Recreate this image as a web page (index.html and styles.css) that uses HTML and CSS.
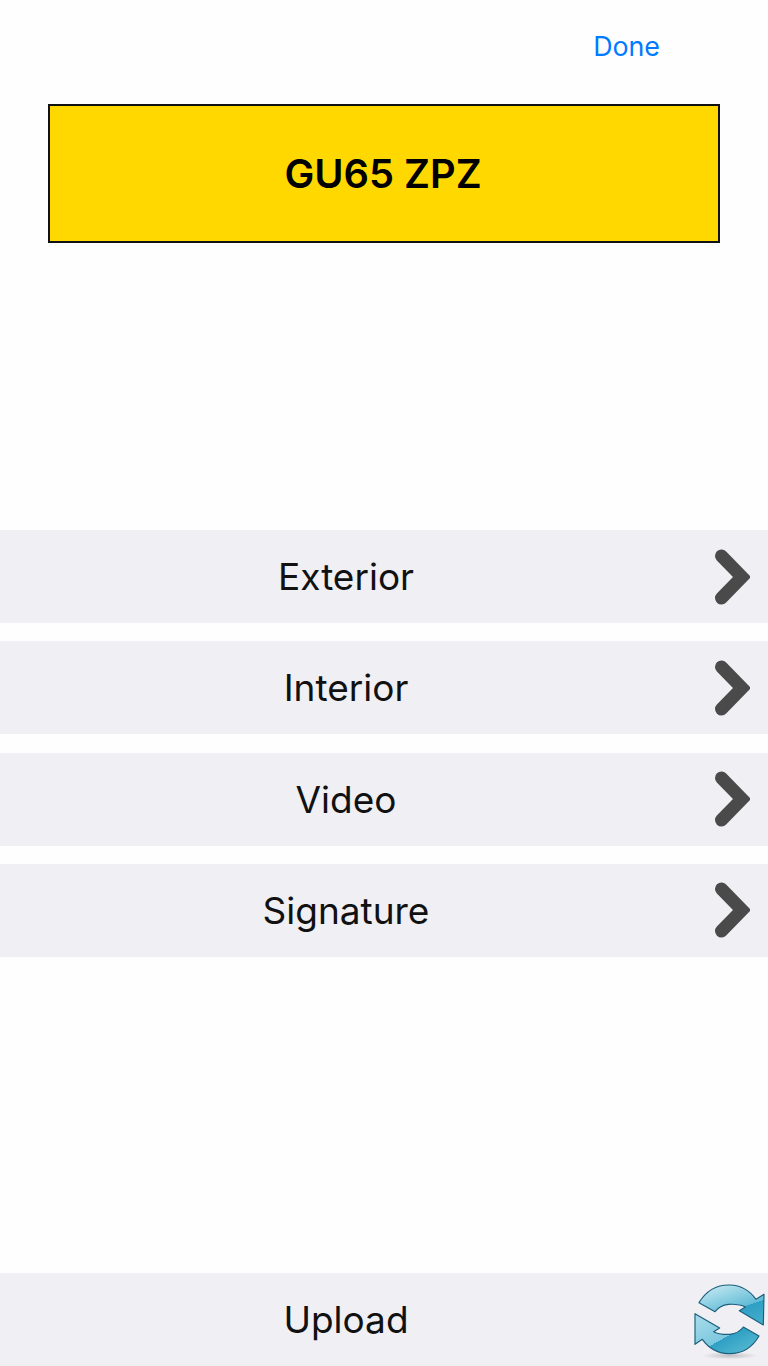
FILE: index.html
```html
<!DOCTYPE html>
<html lang="en">
<head>
    <meta charset="UTF-8">
    <meta name="viewport" content="width=device-width, initial-scale=1.0">
    <title>Vehicle</title>
    <link rel="stylesheet" href="styles.css">
</head>
<body>
    <div class="screen">
        <div class="top-bar">
            <a class="done">Done</a>
        </div>
        <div class="plate">GU65 ZPZ</div>

        <div class="menu">
            <div class="row">
                <span class="row-label">Exterior</span>
                <svg class="chevron" viewBox="0 0 36 56"><path d="M7.5 7 L28 28 L7.5 49"/></svg>
            </div>
            <div class="row">
                <span class="row-label">Interior</span>
                <svg class="chevron" viewBox="0 0 36 56"><path d="M7.5 7 L28 28 L7.5 49"/></svg>
            </div>
            <div class="row">
                <span class="row-label">Video</span>
                <svg class="chevron" viewBox="0 0 36 56"><path d="M7.5 7 L28 28 L7.5 49"/></svg>
            </div>
            <div class="row">
                <span class="row-label">Signature</span>
                <svg class="chevron" viewBox="0 0 36 56"><path d="M7.5 7 L28 28 L7.5 49"/></svg>
            </div>
        </div>

        <div class="row upload">
            <span class="row-label">Upload</span>
            <svg class="sync" viewBox="0 0 264 318">
                <defs>
                    <linearGradient id="syncTop" gradientUnits="userSpaceOnUse" x1="150" y1="70" x2="200" y2="220">
                        <stop offset="0" stop-color="#b6e2ee"/>
                        <stop offset="0.5" stop-color="#62bbd6"/>
                        <stop offset="0.5" stop-color="#2f9fc4"/>
                        <stop offset="1" stop-color="#48b0cf"/>
                    </linearGradient>
                    <linearGradient id="syncBottom" gradientUnits="userSpaceOnUse" x1="90" y1="140" x2="190" y2="320">
                        <stop offset="0" stop-color="#a8dcea"/>
                        <stop offset="0.5" stop-color="#7cc8df"/>
                        <stop offset="0.5" stop-color="#2f9fc4"/>
                        <stop offset="0.8" stop-color="#4fb5cf"/>
                        <stop offset="1" stop-color="#6fcad6"/>
                    </linearGradient>
                    <radialGradient id="syncShadow">
                        <stop offset="0" stop-color="#000" stop-opacity="0.2"/>
                        <stop offset="1" stop-color="#000" stop-opacity="0"/>
                    </radialGradient>
                </defs>
                <ellipse cx="150" cy="287" rx="85" ry="11" fill="url(#syncShadow)"/>
                <path class="sync-arrow sync-top" d="M57 128 C80 90 115 74 150 75 C180 76 208 90 228 118 L252 103 L250 195 L178 152 L196 141 C180 132 165 132 145 133 C128 135 114 143 105 155 Z"/>
                <path class="sync-arrow sync-bottom" d="M237 228 C215 266 180 282 145 281 C115 280 87 266 67 238 L45 253 L45 161 L119 204 L101 215 C117 224 130 224 150 223 C167 221 181 213 190 201 Z"/>
            </svg>
        </div>
    </div>
</body>
</html>
```

FILE: styles.css
```css
html, body {
    margin: 0;
    padding: 0;
}
body {
    background-color: #fefefe;
    font-family: Inter, 'Liberation Sans', sans-serif;
    color: #111;
}
.screen {
    position: relative;
    display: flex;
    flex-direction: column;
    height: 1366px;
    overflow: hidden;
}
.top-bar {
    display: flex;
    justify-content: flex-end;
    height: 104px;
    padding-right: 108px;
    box-sizing: border-box;
}
.done {
    margin-top: 29px;
    font-size: 26.8px;
    line-height: 34px;
    color: #007aff;
}
.plate {
    display: flex;
    align-items: center;
    justify-content: center;
    height: 139px;
    margin: 0 48px;
    padding-right: 2px;
    box-sizing: border-box;
    border: 2px solid #111;
    background-color: #ffd800;
    font-size: 39.8px;
    font-weight: 600;
    color: #000;
}
.menu {
    display: flex;
    flex-direction: column;
    gap: 18.33px;
    margin-top: 287px;
}
.row {
    display: flex;
    align-items: center;
    height: 93px;
    padding-right: 14px;
    box-sizing: border-box;
    background-color: #efeff4;
}
.row-label {
    flex: 1;
    padding-right: 22px;
    text-align: center;
    font-size: 37px;
}
.chevron {
    width: 36px;
    height: 56px;
    margin-right: 4px;
}
.chevron path {
    fill: none;
    stroke: #4a4a4a;
    stroke-width: 13;
    stroke-linecap: round;
    stroke-linejoin: miter;
}
.upload {
    margin-top: auto;
    padding-right: 54px;
}
.sync {
    position: absolute;
    right: 0;
    bottom: 0;
    width: 88px;
    height: 106px;
}
.sync-arrow {
    stroke: #1c5f7c;
    stroke-width: 3.5;
    stroke-linejoin: round;
}
.sync-top {
    fill: url(#syncTop);
}
.sync-bottom {
    fill: url(#syncBottom);
}
```
